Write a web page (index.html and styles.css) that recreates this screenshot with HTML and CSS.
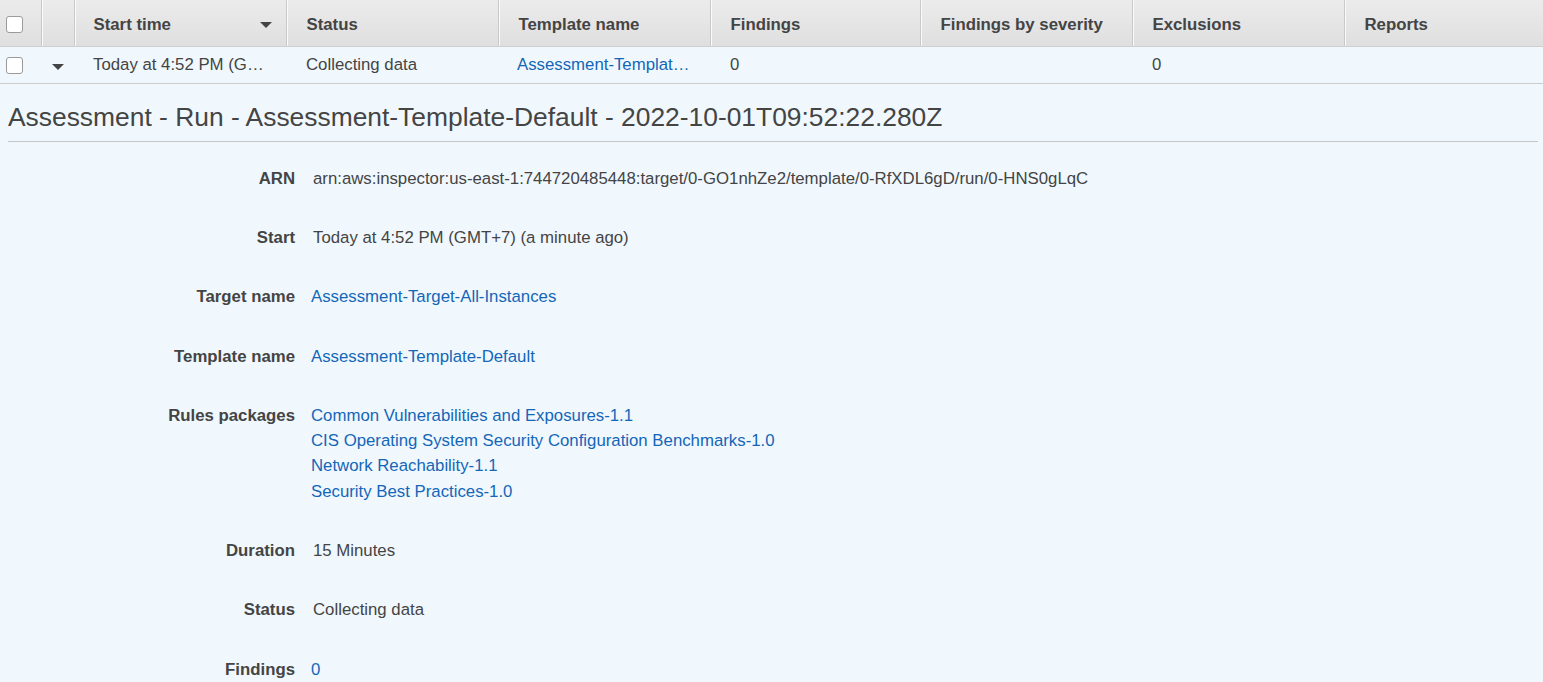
FILE: index.html
```html
<!DOCTYPE html>
<html>
<head>
<meta charset="utf-8">
<link rel="stylesheet" href="styles.css">
</head>
<body>
<table class="grid">
  <colgroup>
    <col class="c-check"><col class="c-exp"><col class="c-w"><col class="c-w"><col class="c-w"><col class="c-f"><col class="c-w"><col class="c-w"><col>
  </colgroup>
  <thead>
    <tr>
      <th class="first"><span class="cb"></span></th>
      <th></th>
      <th><div class="sortable"><span>Start time</span><span class="caret-sort"></span></div></th>
      <th>Status</th>
      <th>Template name</th>
      <th>Findings</th>
      <th>Findings by severity</th>
      <th>Exclusions</th>
      <th>Reports</th>
    </tr>
  </thead>
  <tbody>
    <tr>
      <td><span class="cb"></span></td>
      <td><span class="caret-row"></span></td>
      <td><div class="ell">Today at 4:52 PM (GMT+7) (a minute ago)</div></td>
      <td>Collecting data</td>
      <td><div class="ell link">Assessment-Template-Default</div></td>
      <td>0</td>
      <td></td>
      <td>0</td>
      <td></td>
    </tr>
  </tbody>
</table>
<section class="detail">
  <h2 class="title">Assessment - Run - Assessment-Template-Default - 2022-10-01T09:52:22.280Z</h2>
  <dl class="props">
    <dt>ARN</dt><dd>arn:aws:inspector:us-east-1:744720485448:target/0-GO1nhZe2/template/0-RfXDL6gD/run/0-HNS0gLqC</dd>
    <dt>Start</dt><dd>Today at 4:52 PM (GMT+7) (a minute ago)</dd>
    <dt>Target name</dt><dd><a class="link">Assessment-Target-All-Instances</a></dd>
    <dt>Template name</dt><dd><a class="link">Assessment-Template-Default</a></dd>
    <dt>Rules packages</dt><dd class="list"><a class="link">Common Vulnerabilities and Exposures-1.1</a><a class="link">CIS Operating System Security Configuration Benchmarks-1.0</a><a class="link">Network Reachability-1.1</a><a class="link">Security Best Practices-1.0</a></dd>
    <dt>Duration</dt><dd>15 Minutes</dd>
    <dt>Status</dt><dd>Collecting data</dd>
    <dt>Findings</dt><dd><a class="link">0</a></dd>
  </dl>
</section>
</body>
</html>
```
FILE: styles.css
```css
html, body { margin: 0; padding: 0; }
body {
  background: #f0f8fe;
  font-family: "Liberation Sans", Arial, sans-serif;
  font-size: 16.8px;
  color: #444;
  overflow: hidden;
}
.grid {
  width: 100%;
  border-collapse: collapse;
  table-layout: fixed;
}
.c-check { width: 41px; }
.c-exp { width: 33px; }
.c-w { width: 212px; }
.c-f { width: 210px; }
.grid th {
  height: 46px;
  padding: 4px 0 0 20px;
  text-align: left;
  font-weight: bold;
  color: #444;
  background: linear-gradient(#ebebeb, #dfdfdf);
  border-bottom: 1px solid #cfcfcf;
  border-left: 1px solid #c9c9c9;
  box-shadow: inset 1px 0 0 #fafafa;
  box-sizing: border-box;
  white-space: nowrap;
}
.grid th.first { border-left: none; box-shadow: none; padding: 4px 0 0 6px; }
.grid th:nth-child(2) { padding: 0; }
.grid th:nth-child(3) { padding-left: 19px; }
.sortable { display: flex; align-items: center; justify-content: space-between; padding-right: 14px; }
.caret-sort {
  width: 0; height: 0;
  border-left: 6px solid transparent;
  border-right: 6px solid transparent;
  border-top: 6px solid #444;
}
.grid td {
  height: 37px;
  padding: 0 0 0 20px;
  border-bottom: 1px solid #cccccc;
  color: #444;
  white-space: nowrap;
  box-sizing: border-box;
}
.grid td:first-child { padding: 1px 0 0 6px; }
.grid td:nth-child(2) { padding: 1px 0 0 11px; }
.grid td:nth-child(3) { padding-left: 19px; }
.grid td:nth-child(5) { padding-left: 19px; }
.ell { overflow: hidden; text-overflow: ellipsis; white-space: nowrap; padding-right: 18px; }
.cb {
  display: block;
  width: 15px; height: 15px;
  border: 1px solid #9a9a9a;
  border-radius: 3px;
  background: #fff;
}
.caret-row {
  display: block;
  width: 0; height: 0;
  border-left: 6px solid transparent;
  border-right: 6px solid transparent;
  border-top: 6px solid #444;
  margin-top: 3px;
}
.link { color: #1466b8; text-decoration: none; }
.detail { padding: 0 5px 0 8px; }
.title {
  margin: 0;
  padding: 17px 0 8px;
  font-size: 26.4px;
  line-height: 32px;
  font-weight: normal;
  color: #444;
  border-bottom: 1px solid #c6c6c6;
}
.props {
  display: grid;
  grid-template-columns: 287px 1fr;
  column-gap: 16px;
  margin: 24px 0 0;
}
.props dt {
  text-align: right;
  font-weight: bold;
  line-height: 25.2px;
  padding-bottom: 34.2px;
  color: #444;
}
.props dd {
  margin: 0;
  line-height: 25.2px;
  padding-bottom: 34.2px;
  padding-left: 2px;
  color: #444;
}
.props dd.list { display: flex; flex-direction: column; padding-left: 0; }
.props dd:has(.link) { padding-left: 0; }
```
